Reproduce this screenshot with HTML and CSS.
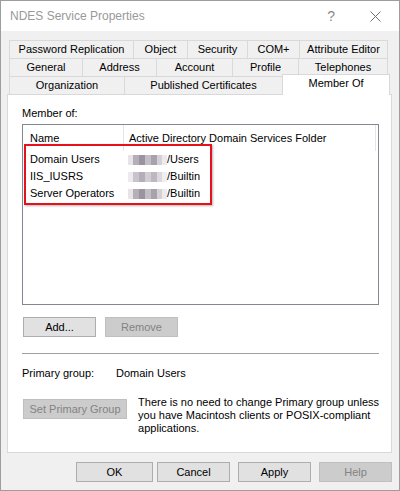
FILE: index.html
```html
<!DOCTYPE html>
<html lang="en">
<head>
    <meta charset="UTF-8">
    <meta name="viewport" content="width=device-width, initial-scale=1.0">
    <title>NDES Service Properties</title>
    <link rel="stylesheet" href="styles.css">
</head>
<body>

    <div class="window">
        <div class="titlebar">
            <span class="title">NDES Service Properties</span>
            <span class="help-glyph">?</span>
            <svg class="close" width="11" height="11" viewBox="0 0 11 11">
                <path d="M0.5 0.5 L10.5 10.5 M10.5 0.5 L0.5 10.5" stroke="#707070" stroke-width="1" fill="none"/>
            </svg>
        </div>

        <div class="sheet">
            <div class="tabs">
                <div class="tab-row row-a">
                    <div class="tab">Password Replication</div>
                    <div class="tab">Object</div>
                    <div class="tab">Security</div>
                    <div class="tab">COM+</div>
                    <div class="tab">Attribute Editor</div>
                </div>
                <div class="tab-row row-b">
                    <div class="tab">General</div>
                    <div class="tab">Address</div>
                    <div class="tab">Account</div>
                    <div class="tab">Profile</div>
                    <div class="tab">Telephones</div>
                </div>
                <div class="tab-row row-c">
                    <div class="tab">Organization</div>
                    <div class="tab">Published Certificates</div>
                    <div class="tab active">Member Of</div>
                </div>
            </div>

            <div class="panel">
                <div class="label">Member of:</div>

                <div class="listbox">
                    <div class="list-head">
                        <span class="col-name">Name</span>
                        <span class="col-folder">Active Directory Domain Services Folder</span>
                    </div>
                    <div class="list-row">
                        <span class="cell-name">Domain Users</span>
                        <span class="cell-folder"><span class="masked"></span>/Users</span>
                    </div>
                    <div class="list-row">
                        <span class="cell-name">IIS_IUSRS</span>
                        <span class="cell-folder"><span class="masked light"></span>/Builtin</span>
                    </div>
                    <div class="list-row">
                        <span class="cell-name">Server Operators</span>
                        <span class="cell-folder"><span class="masked"></span>/Builtin</span>
                    </div>
                    <div class="callout"></div>
                </div>

                <div class="btn-row">
                    <button class="btn">Add...</button>
                    <button class="btn" disabled>Remove</button>
                </div>

                <div class="divider"></div>

                <div class="primary">
                    <span class="primary-label">Primary group:</span>
                    <span>Domain Users</span>
                </div>

                <div class="primary-set">
                    <button class="btn wide" disabled>Set Primary Group</button>
                    <p class="note">There is no need to change Primary group unless<br>you have Macintosh clients or POSIX-compliant<br>applications.</p>
                </div>
            </div>

            <div class="dialog-buttons">
                <button class="btn ok">OK</button>
                <button class="btn">Cancel</button>
                <button class="btn">Apply</button>
                <button class="btn" disabled>Help</button>
            </div>
        </div>
    </div>

</body>
</html>
```

FILE: styles.css
```css
body {
    margin: 0;
    background-color: #ffffff;
}

.window {
    width: 400px;
    height: 491px;
    box-sizing: border-box;
    border: 1px solid #9d9d9d;
    background-color: #f0f0f0;
    font-family: "Liberation Sans", Arial, sans-serif;
    font-size: 11px;
    color: #000;
    display: flex;
    flex-direction: column;
}

/* title bar */
.titlebar {
    height: 30px;
    background-color: #fff;
    display: flex;
    align-items: center;
    padding-left: 9px;
}

.title {
    flex: 1;
    font-size: 12px;
    color: #999;
}

.help-glyph {
    font-size: 14px;
    color: #8a8a8a;
    margin-right: 35px;
}

.close {
    margin-right: 18px;
}

/* tabbed sheet */
.sheet {
    flex: 1;
    padding: 9px 7px 0 6px;
}

.tabs {
    margin-left: 2px;
    width: 379px;
}

.tab-row {
    display: grid;
    height: 18px;
}

.row-a { grid-template-columns: 124px 54px 60px 52px 89px; }
.row-b { grid-template-columns: 73px 74px 76px 66px 90px; }
.row-c { grid-template-columns: 115px 158px 106px; }

.tab {
    border-top: 1px solid #d9d9d9;
    border-left: 1px solid #d9d9d9;
    line-height: 17px;
    text-align: center;
    white-space: nowrap;
    background-color: #f0f0f0;
}

.tab:last-child {
    border-right: 1px solid #d9d9d9;
}

.tab.active {
    background-color: #fff;
    border: 1px solid #d9d9d9;
    border-bottom: none;
    margin: -2px -2px -1px 0;
    position: relative;
    z-index: 1;
}

.panel {
    height: 359px;
    box-sizing: border-box;
    border: 1px solid #d9d9d9;
    background-color: #fff;
    padding: 12px 12px 0 14px;
}

.label {
    line-height: 13px;
}

/* member list */
.listbox {
    position: relative;
    margin-top: 4px;
    height: 181px;
    box-sizing: border-box;
    border: 1px solid #828790;
}

.list-head {
    display: flex;
    height: 26px;
    align-items: stretch;
}

.list-head span {
    display: flex;
    align-items: center;
    border-right: 1px solid #e5e5e5;
    box-sizing: border-box;
    padding-bottom: 1px;
}

.col-name {
    width: 101px;
    padding-left: 7px;
}

.col-folder {
    width: 252px;
    padding-left: 5px;
}

.list-row {
    display: flex;
    height: 17px;
    line-height: 17px;
}

.cell-name {
    width: 105px;
    padding-left: 7px;
    box-sizing: border-box;
}

.cell-folder {
    display: flex;
    align-items: center;
}

.masked {
    display: inline-block;
    width: 39px;
    height: 10px;
    background: linear-gradient(90deg, #e6e4e8 0 5px, #b5afb8 5px 11px, #9b94a0 11px 17px, #c3bec6 17px 23px, #a8a2ac 23px 29px, #d4d0d6 29px 34px, #ebeaec 34px 39px);
}

.masked.light {
    background: linear-gradient(90deg, #eceaee 0 5px, #c9c4cc 5px 11px, #b4aeb8 11px 17px, #d2cdd4 17px 23px, #bdb8c0 23px 29px, #dcd8de 29px 34px, #efeef0 34px 39px);
}

/* highlight drawn over the first rows */
.callout {
    position: absolute;
    left: 1px;
    top: 19px;
    width: 188px;
    height: 61px;
    box-sizing: border-box;
    border: 2px solid #e5121c;
    box-shadow: 1px 1px 2px rgba(0, 0, 0, 0.3);
}

/* buttons */
.btn {
    width: 73px;
    height: 20px;
    box-sizing: border-box;
    padding: 0;
    font-family: "Liberation Sans", Arial, sans-serif;
    font-size: 11px;
    color: #000;
    background-color: #e1e1e1;
    border: 1px solid #adadad;
}

.btn:disabled {
    background-color: #cccccc;
    border-color: #bfbfbf;
    color: #838383;
}

.btn-row {
    display: flex;
    gap: 9px;
    margin-top: 12px;
    padding-left: 1px;
}

.divider {
    margin-top: 16px;
    height: 1px;
    background-color: #a0a0a0;
}

.primary {
    display: flex;
    margin-top: 13px;
    line-height: 13px;
}

.primary-label {
    width: 94px;
}

.primary-set {
    display: flex;
    margin-top: 16px;
    padding-left: 1px;
}

.btn.wide {
    width: 112px;
    margin-top: 3px;
}

.note {
    margin: 0 0 0 11px;
    line-height: 13px;
    white-space: nowrap;
}

.dialog-buttons {
    display: flex;
    justify-content: flex-end;
    gap: 8px;
    margin-top: 9px;
}

.dialog-buttons .btn.ok {
    width: 77px;
    margin-right: -4px;
}
```
